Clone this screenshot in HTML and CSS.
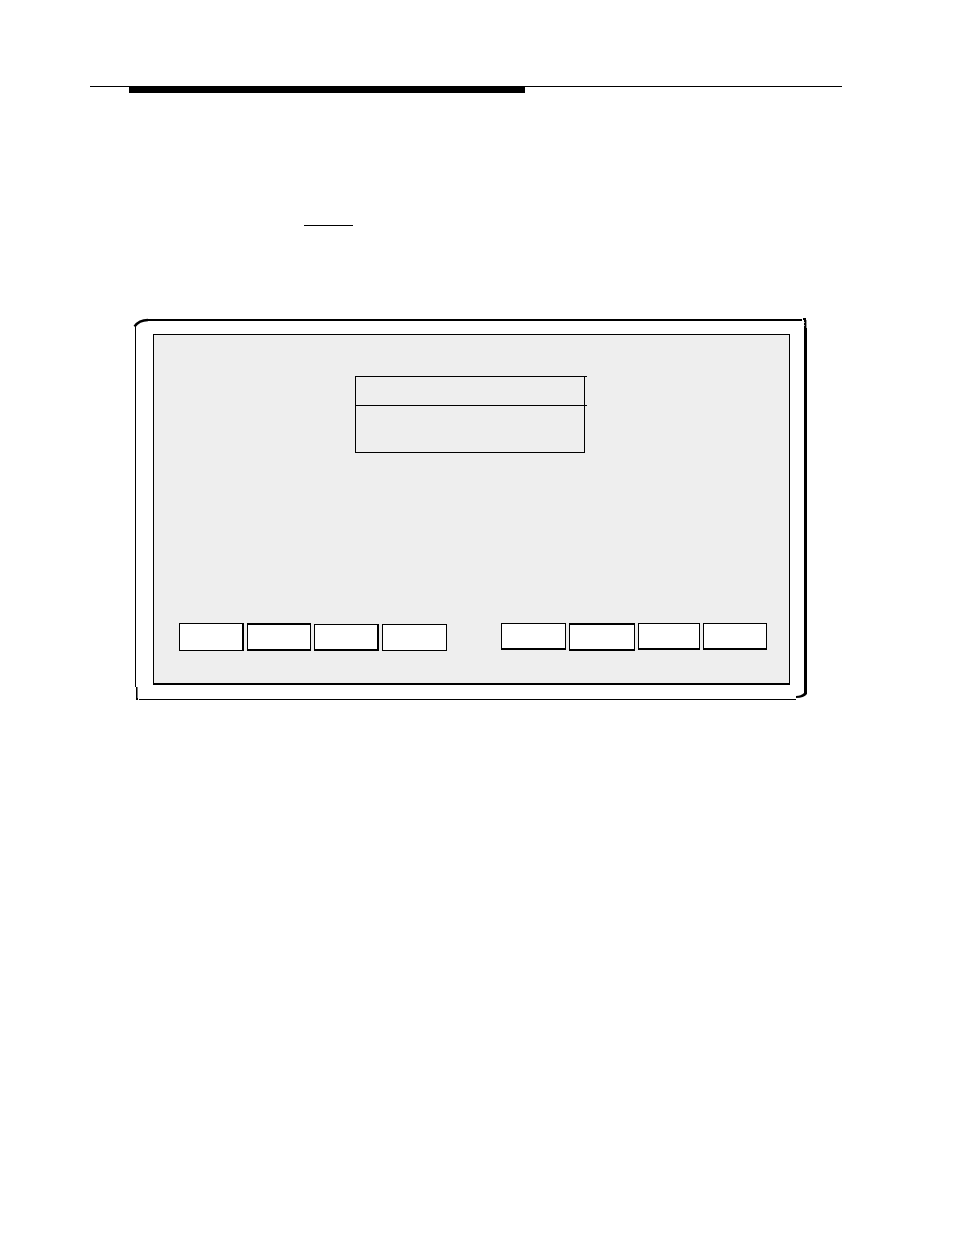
FILE: index.html
```html
<!DOCTYPE html>
<html lang="en">
<head>
<meta charset="utf-8">
<meta name="viewport" content="width=device-width, initial-scale=1">
<title>Terminal screen</title>
<link rel="stylesheet" href="styles.css">
</head>
<body>
<header class="page-rule"><div class="page-rule-bar"></div></header>
<main class="content">
  <div class="short-rule"></div>
  <section class="terminal">
    <svg class="corner corner-tl" width="16" height="12" viewBox="0 0 16 12" aria-hidden="true">
      <path d="M0 0H14V4H4V9H0Z" fill="#fff"/>
      <path d="M1.5 9.5Q6 3 15 3" fill="none" stroke="#000" stroke-width="2.3"/>
    </svg>
    <svg class="corner corner-tr" width="6" height="12" viewBox="0 0 6 12" aria-hidden="true">
      <path d="M1 0H6V10H1Z" fill="#fff"/>
      <path d="M2 0H5V10H3V2H2Z" fill="#000"/>
      <path d="M5 2H6V10H5ZM3 4H4V5H3ZM3 7H4V8H3Z" fill="#999"/>
    </svg>
    <svg class="corner corner-bl" width="4" height="13" viewBox="0 0 4 13" aria-hidden="true">
      <path d="M0 0H4V13H0Z" fill="#fff"/>
      <path d="M1 0H2V13H1Z" fill="#000"/>
      <path d="M2 0H3V11H2Z" fill="#777"/>
      <path d="M2 11H3V13H2Z" fill="#000"/>
    </svg>
    <svg class="corner corner-br" width="11" height="8" viewBox="0 0 11 8" aria-hidden="true">
      <path d="M0 0H11V8H0Z" fill="#fff"/>
      <path d="M8 0H11V2Q8 6 0 6V4Q5 4 8 1Z" fill="#000"/>
    </svg>
    <div class="screen">
      <div class="panel">
        <div class="panel-head"></div>
        <div class="panel-body"></div>
      </div>
      <div class="keys">
        <div class="key-group key-group-left">
          <button class="key key-right" type="button" aria-label="Function key 1"></button>
          <button class="key key-slim key-top key-bottom" type="button" aria-label="Function key 2"></button>
          <button class="key key-low key-right key-bottom" type="button" aria-label="Function key 3"></button>
          <button class="key key-low" type="button" aria-label="Function key 4"></button>
        </div>
        <div class="key-group key-group-right">
          <button class="key key-short key-bottom" type="button" aria-label="Function key 5"></button>
          <button class="key key-wide key-top key-bottom" type="button" aria-label="Function key 6"></button>
          <button class="key key-narrow key-short key-bottom" type="button" aria-label="Function key 7"></button>
          <button class="key key-slim key-short key-bottom" type="button" aria-label="Function key 8"></button>
        </div>
      </div>
    </div>
  </section>
</main>
</body>
</html>
```

FILE: styles.css
```css
* {
  box-sizing: border-box;
}

body {
  margin: 0;
  padding: 86px 112px 64px 90px;
  background: #fff;
  font-family: "Liberation Sans", Arial, sans-serif;
}

.page-rule {
  border-top: 1px solid #000;
}

.page-rule-bar {
  width: 396px;
  max-width: 80%;
  height: 6px;
  margin-left: 39px;
  background: #000;
}

.content {
  padding: 132px 35px 0 45px;
}

.short-rule {
  width: 49px;
  height: 1px;
  margin-left: 169px;
  background: #000;
}

.terminal {
  position: relative;
  margin-top: 93px;
  padding: 13px 14px 14px 17px;
  border: solid #000;
  border-width: 2px 3px 1px 1px;
}

.corner {
  position: absolute;
}

.corner-tl {
  top: -4px;
  left: -3px;
}

.corner-tr {
  top: -3px;
  right: -3px;
}

.corner-bl {
  bottom: -1px;
  left: -1px;
}

.corner-br {
  right: -3px;
  bottom: -1px;
}

.screen {
  padding: 41px 22px 32px 25px;
  border: solid #000;
  border-width: 1px 1px 2px 1px;
  background: #eee;
}

.panel {
  width: 230px;
  margin-left: 176px;
  border: solid #000;
  border-width: 0 1px 1px 1px;
}

.panel-head {
  height: 30px;
  margin-right: -3px;
  border: solid #000;
  border-width: 1px 0;
}

.panel-body {
  height: 46px;
}

.keys {
  display: flex;
  gap: 54px;
  margin-top: 170px;
}

.key-group {
  display: flex;
  gap: 3px;
  min-width: 0;
}

.key-group-left {
  flex: 1 1 268px;
}

.key-group-right {
  flex: 1 1 266px;
}

.key {
  flex: 1 1 65px;
  min-width: 0;
  height: 28px;
  padding: 0;
  border: 1px solid #000;
  border-radius: 0;
  background: #fff;
}

.key-wide {
  flex-basis: 66px;
}

.key-slim {
  flex-basis: 64px;
}

.key-narrow {
  flex-basis: 62px;
}

.key-short {
  height: 27px;
}

.key-low {
  height: 27px;
  margin-top: 1px;
}

.key-top {
  border-top-width: 2px;
}

.key-right {
  border-right-width: 2px;
}

.key-bottom {
  border-bottom-width: 2px;
}
```
